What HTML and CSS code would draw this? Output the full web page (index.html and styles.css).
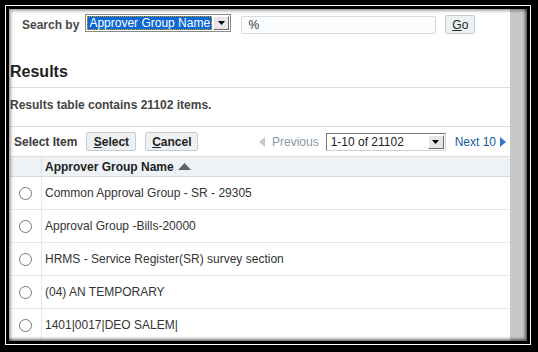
FILE: index.html
```html
<!DOCTYPE html>
<html>
<head>
<meta charset="utf-8">
<link rel="stylesheet" href="styles.css">
</head>
<body>
<div class="frame">
  <div class="ring">
    <div class="inner">
      <div class="main">
        <div class="search">
          <span class="search-label">Search by</span>
          <div class="combo">
            <span class="combo-value">Approver Group Name</span>
            <span class="combo-btn"><svg width="7" height="4" viewBox="0 0 7 4"><path d="M0 0h7L3.5 4z" fill="#000"/></svg></span>
          </div>
          <div class="text-input">%</div>
          <div class="btn btn-go"><u>G</u>o</div>
        </div>
        <h2 class="heading">Results</h2>
        <div class="info">Results table contains 21102 items.</div>
        <div class="toolbar">
          <span class="tb-label">Select Item</span>
          <div class="btn btn-sel"><u>S</u>elect</div>
          <div class="btn btn-cancel"><u>C</u>ancel</div>
          <div class="pager">
            <svg class="tri" width="6" height="10" viewBox="0 0 6 10"><path d="M6 0v10L0 5z" fill="#c3cbd1"/></svg>
            <span class="prev">Previous</span>
            <div class="range">
              <span class="range-value">1-10 of 21102</span>
              <span class="range-btn"><svg width="7" height="4" viewBox="0 0 7 4"><path d="M0 0h7L3.5 4z" fill="#000"/></svg></span>
            </div>
            <span class="next">Next 10</span>
            <svg class="tri" width="6" height="10" viewBox="0 0 6 10"><path d="M0 0v10L6 5z" fill="#2a78c9"/></svg>
          </div>
        </div>
        <div class="table">
          <div class="row head">
            <div class="c-sel"></div>
            <div class="c-name">Approver Group Name <svg class="sort" width="13" height="7" viewBox="0 0 13 7"><path d="M0 7L6.5 0L13 7z" fill="#58646d"/></svg></div>
          </div>
          <div class="row"><div class="c-sel"><span class="radio"></span></div><div class="c-name">Common Approval Group - SR - 29305</div></div>
          <div class="row"><div class="c-sel"><span class="radio"></span></div><div class="c-name">Approval Group -Bills-20000</div></div>
          <div class="row"><div class="c-sel"><span class="radio"></span></div><div class="c-name">HRMS - Service Register(SR) survey section</div></div>
          <div class="row"><div class="c-sel"><span class="radio"></span></div><div class="c-name">(04) AN TEMPORARY</div></div>
          <div class="row"><div class="c-sel"><span class="radio"></span></div><div class="c-name">1401|0017|DEO SALEM|</div></div>
        </div>
      </div>
      <div class="scrollbar"></div>
    </div>
  </div>
</div>
</body>
</html>
```
FILE: styles.css
```css
* { box-sizing: border-box; }
html, body { margin: 0; padding: 0; background: #000; }
body { font-family: "Liberation Sans", Arial, sans-serif; font-size: 12px; color: #333; }

.frame { width: 538px; height: 352px; background: #000; padding: 5px 7px 7px 5px; }
.ring { width: 100%; height: 100%; border: 1px solid #fff; padding: 3px; background: #000; }
.inner {
  width: 100%; height: 100%; background: #fff; display: flex; overflow: hidden; position: relative;
}
.inner::after {
  content: ""; position: absolute; inset: 0; pointer-events: none;
  box-shadow: inset 2px 2px 3px rgba(0,0,0,0.35), inset -2px -2px 3px rgba(0,0,0,0.55);
}
.main { flex: 1; padding-left: 1px; overflow: hidden; }
.scrollbar { width: 17px; background: #c8c8c8; }

.search { display: flex; align-items: center; height: 20px; margin-top: 5px; padding-left: 12px; }
.search-label { font-weight: bold; color: #4a4a4a; margin-right: 6px; margin-top: 1px; }
.combo {
  display: flex; width: 146px; height: 18px; border: 1px solid #8a8a8a; padding: 1px; margin-bottom: 3px;
  background: #fff;
}
.combo-value {
  flex: 1; background: #0a68d6; color: #fff; outline: 1px dotted #e0a000; outline-offset: -1px;
  line-height: 14px; padding-left: 2px; white-space: nowrap; overflow: hidden;
}
.combo-btn, .range-btn {
  width: 16px; display: flex; align-items: center; justify-content: center; background: #e6e6e6;
  border: 1px solid; border-color: #fff #6a6a6a #6a6a6a #fff; margin-left: 1px;
}
.text-input {
  width: 195px; height: 18px; margin-left: 10px; margin-top: 2px; border: 1px solid #d6dbdf; border-radius: 2px;
  background: #fbfcfd; padding-left: 6px; line-height: 16px; color: #333;
}
.btn {
  height: 19px; border: 1px solid #c5ccd1; border-radius: 2px; background: #eef1f3; color: #222;
  display: flex; align-items: center; justify-content: center; font-size: 12px;
}
.btn u { text-decoration: underline; }
.btn-go { width: 30px; margin-left: 9px; margin-top: 1px; }

.heading { margin: 29px 0 0; font-size: 16px; line-height: 18px; font-weight: bold; color: #222; }
.info {
  margin-top: 6px; border-top: 1px solid #d8dee2; padding-top: 10px; line-height: 14px; font-weight: bold; color: #444;
}
.toolbar {
  margin-top: 14px; border-top: 1px solid #d8dee2; height: 30px; display: flex; align-items: center; padding-left: 4px;
}
.tb-label { color: #3a3a3a; margin-right: 9px; font-weight: bold; }
.btn-sel { width: 50px; font-weight: bold; }
.btn-cancel { width: 53px; margin-left: 9px; font-weight: bold; }
.pager { margin-left: auto; display: flex; align-items: center; padding-right: 4px; }
.prev { color: #8c98a1; margin-left: 7px; }
.range {
  display: flex; width: 120px; height: 18px; margin-left: 7px; border: 1px solid; border-color: #7a7a7a #d0d0d0 #d0d0d0 #7a7a7a;
  padding: 1px; background: #fff;
}
.range-value { flex: 1; line-height: 14px; padding-left: 3px; color: #222; }
.next { color: #18599b; margin-left: 9px; margin-right: 4px; }

.table { border-top: 1px solid #d8dee2; }
.row { display: flex; height: 33px; border-bottom: 1px solid #e6e9eb; }
.row.head { height: 20px; background: #eef2f5; border-bottom: 1px solid #d3dae0; }
.c-sel { width: 32px; border-right: 1px solid #e6e9eb; display: flex; align-items: center; padding-left: 9px; }
.head .c-sel { border-right-color: #dde3e7; }
.c-name { flex: 1; display: flex; align-items: center; padding-left: 3px; color: #333; }
.head .c-name { font-weight: bold; color: #222; }
.sort { margin-left: 4px; }
.radio { width: 13px; height: 13px; border: 1px solid #777; border-radius: 50%; background: #fff; }
```
